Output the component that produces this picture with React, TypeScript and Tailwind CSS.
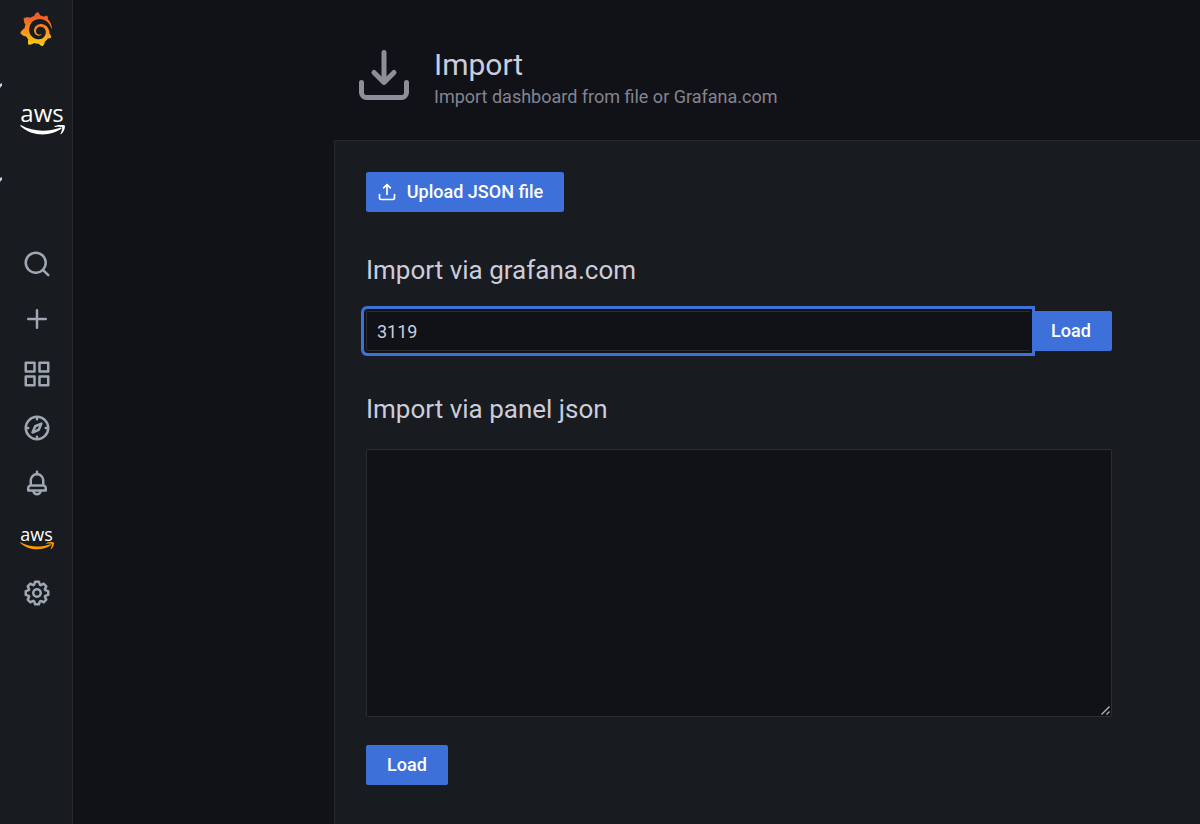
import {useState} from 'react'
import type {ReactNode} from 'react'
import {SiGrafana} from 'react-icons/si'

const TRAY =
  'M21,14a1,1,0,0,0-1,1v4a1,1,0,0,1-1,1H5a1,1,0,0,1-1-1V15a1,1,0,0,0-2,0v4a3,3,0,0,0,3,3H19a3,3,0,0,0,3-3V15A1,1,0,0,0,21,14Z'

const icons = {
  search:
    'M21.71,20.29,18,16.61A9,9,0,1,0,16.61,18l3.68,3.68a1,1,0,0,0,1.42,0A1,1,0,0,0,21.71,20.29ZM11,18a7,7,0,1,1,7-7A7,7,0,0,1,11,18Z',
  plus: 'M19,11H13V5a1,1,0,0,0-2,0v6H5a1,1,0,0,0,0,2h6v6a1,1,0,0,0,2,0V13h6a1,1,0,0,0,0-2Z',
  apps: 'M10,13H3a1,1,0,0,0-1,1v7a1,1,0,0,0,1,1h7a1,1,0,0,0,1-1V14A1,1,0,0,0,10,13ZM9,20H4V15H9ZM21,2H14a1,1,0,0,0-1,1v7a1,1,0,0,0,1,1h7a1,1,0,0,0,1-1V3A1,1,0,0,0,21,2ZM20,9H15V4h5Zm1,4H14a1,1,0,0,0-1,1v7a1,1,0,0,0,1,1h7a1,1,0,0,0,1-1V14A1,1,0,0,0,21,13Zm-1,7H15V15h5ZM10,2H3A1,1,0,0,0,2,3v7a1,1,0,0,0,1,1h7a1,1,0,0,0,1-1V3A1,1,0,0,0,10,2ZM9,9H4V4H9Z',
  compass:
    'M12,2A10,10,0,1,0,22,12,10,10,0,0,0,12,2Zm1,17.93V19a1,1,0,0,0-2,0v.93A8,8,0,0,1,4.07,13H5a1,1,0,0,0,0-2H4.07A8,8,0,0,1,11,4.07V5a1,1,0,0,0,2,0V4.07A8,8,0,0,1,19.93,11H19a1,1,0,0,0,0,2h.93A8,8,0,0,1,13,19.93ZM15.14,7.55l-5,2.12a1,1,0,0,0-.52.52l-2.12,5a1,1,0,0,0,.21,1.1,1,1,0,0,0,.7.3.93.93,0,0,0,.4-.09l5-2.12a1,1,0,0,0,.52-.52l2.12-5a1,1,0,0,0-1.31-1.31Zm-2.49,5.1-2.28,1,1-2.28,2.28-1Z',
  bell: 'M18,13.18V10a6,6,0,0,0-5-5.91V3a1,1,0,0,0-2,0V4.09A6,6,0,0,0,6,10v3.18A3,3,0,0,0,4,16v2a1,1,0,0,0,1,1H8.14a4,4,0,0,0,7.72,0H19a1,1,0,0,0,1-1V16A3,3,0,0,0,18,13.18ZM8,10a4,4,0,0,1,8,0v3H8Zm4,10a2,2,0,0,1-1.72-1h3.44A2,2,0,0,1,12,20Zm6-3H6V16a1,1,0,0,1,1-1H17a1,1,0,0,1,1,1Z',
  cog: 'M21.32,9.55l-1.89-.63.89-1.78A1,1,0,0,0,20.13,6L18,3.87a1,1,0,0,0-1.15-.19l-1.78.89-.63-1.89A1,1,0,0,0,13.5,2h-3a1,1,0,0,0-.95.68L8.92,4.57,7.14,3.68A1,1,0,0,0,6,3.87L3.87,6a1,1,0,0,0-.19,1.15l.89,1.78-1.89.63A1,1,0,0,0,2,10.5v3a1,1,0,0,0,.68.95l1.89.63-.89,1.78A1,1,0,0,0,3.87,18L6,20.13a1,1,0,0,0,1.15.19l1.78-.89.63,1.89a1,1,0,0,0,.95.68h3a1,1,0,0,0,.95-.68l.63-1.89,1.78.89A1,1,0,0,0,18,20.13L20.13,18a1,1,0,0,0,.19-1.15l-.89-1.78,1.89-.63A1,1,0,0,0,22,13.5v-3A1,1,0,0,0,21.32,9.55ZM20,12.78l-1.2.4A2,2,0,0,0,17.64,16l.57,1.14-1.1,1.1L16,17.64a2,2,0,0,0-2.79,1.16l-.4,1.2H11.22l-.4-1.2A2,2,0,0,0,8,17.64l-1.14.57-1.1-1.1L6.36,16A2,2,0,0,0,5.2,13.18L4,12.78V11.22l1.2-.4A2,2,0,0,0,6.36,8L5.79,6.89l1.1-1.1L8,6.36A2,2,0,0,0,10.82,5.2l.4-1.2h1.56l.4,1.2A2,2,0,0,0,16,6.36l1.14-.57,1.1,1.1L17.64,8a2,2,0,0,0,1.16,2.79l1.2.4ZM12,8a4,4,0,1,0,4,4A4,4,0,0,0,12,8Zm0,6a2,2,0,1,1,2-2A2,2,0,0,1,12,14Z',
  import: `${TRAY}M11.29,15.71a1,1,0,0,0,.33.21.94.94,0,0,0,.76,0,1,1,0,0,0,.33-.21l4-4a1,1,0,0,0-1.42-1.42L13,12.59V3a1,1,0,0,0-2,0v9.59l-2.29-2.3a1,1,0,1,0-1.42,1.42Z`,
  upload: `${TRAY}M8.71,7.71,11,5.41V15a1,1,0,0,0,2,0V5.41l2.29,2.3a1,1,0,0,0,1.42,0,1,1,0,0,0,0-1.42l-4-4a1,1,0,0,0-.33-.21,1,1,0,0,0-.76,0,1,1,0,0,0-.33.21l-4,4A1,1,0,1,0,8.71,7.71Z`,
}

function Icon({
  name,
  className,
}: {
  name: keyof typeof icons
  className: string
}) {
  return (
    <svg
      viewBox="0 0 24 24"
      fill="currentColor"
      className={className}
      aria-hidden="true"
    >
      <path d={icons[name]} />
    </svg>
  )
}

function Smile({className}: {className: string}) {
  return (
    <svg
      viewBox="0 0 45 10"
      fill="currentColor"
      className={className}
      aria-hidden="true"
    >
      <path d="M.4.9C0 .4.6-.1 1.3.3 13 6.8 27 7.3 40 2.7c1.2-.4 2.1.6 1 1.4C30 11.6 11.5 11.6.4.9Z" />
      <path d="M42 2.4c-.8-1-5.2-.5-7.2-.3-.6.1-.7-.5-.1-.8 3.4-2 9.3-1.6 10-.8.7.9-.2 6-3.4 8.6-.5.4-1 .2-.8-.4.8-1.8 2.3-5.3 1.5-6.3Z" />
    </svg>
  )
}

function NavItem({label, children}: {label: string; children: ReactNode}) {
  return (
    <li>
      <a
        href="#"
        aria-label={label}
        className="flex size-full flex-col items-center justify-center"
      >
        {children}
      </a>
    </li>
  )
}

function GrafanaLogo() {
  return (
    <>
      <svg className="absolute size-0" aria-hidden="true">
        <defs>
          <linearGradient id="grafana" x1="0" y1="1" x2="0" y2="0">
            <stop offset="0" stopColor="#fcd40c" />
            <stop offset="0.3" stopColor="#faa41a" />
            <stop offset="0.9" stopColor="#f05a28" />
          </linearGradient>
        </defs>
      </svg>
      <SiGrafana className="size-[34px]" fill="url(#grafana)" />
    </>
  )
}

// Tip of an element that hangs past the left edge of the window
function EdgeMark() {
  return (
    <svg viewBox="0 0 2 6" className="h-[6px] w-[2px]" aria-hidden="true">
      <path d="M0 1 2 0v2.500L0 5Z" fill="#ccccdc" />
    </svg>
  )
}

function Sidebar() {
  return (
    <nav
      aria-label="Main"
      className="w-[73px] shrink-0 border-r border-[#25282d] bg-[#181b1f]"
    >
      <a
        href="#"
        aria-label="Home"
        className="flex h-[58px] items-center justify-center"
      >
        <GrafanaLogo />
      </a>
      <div className="flex h-[179px] flex-col pt-[25px]">
        <EdgeMark />
        <div className="flex h-[88px] flex-col items-center pt-3 pl-3 text-white">
          <span className="font-['Open_Sans',sans-serif] text-2xl leading-6 font-medium">
            aws
          </span>
          <Smile className="h-[10px] w-[45px]" />
        </div>
        <EdgeMark />
      </div>
      <ul className="grid h-[383px] auto-rows-fr pl-px text-[#9fa7b3]">
        <NavItem label="Search">
          <Icon name="search" className="size-[30px]" />
        </NavItem>
        <NavItem label="Create">
          <Icon name="plus" className="size-[30px]" />
        </NavItem>
        <NavItem label="Dashboards">
          <Icon name="apps" className="size-[30px]" />
        </NavItem>
        <NavItem label="Explore">
          <Icon name="compass" className="size-[30px]" />
        </NavItem>
        <NavItem label="Alerting">
          <Icon name="bell" className="size-[30px]" />
        </NavItem>
        <NavItem label="AWS">
          <span className="font-['Open_Sans',sans-serif] text-lg leading-4 font-medium text-white">
            aws
          </span>
          <Smile className="h-2 w-[34px] text-[#ff9900]" />
        </NavItem>
        <NavItem label="Configuration">
          <Icon name="cog" className="size-[30px]" />
        </NavItem>
      </ul>
    </nav>
  )
}

const button =
  'flex h-10 items-center justify-center rounded-[2px] bg-[#3d71d9] text-lg font-medium text-white'

function ImportForm() {
  const [dashboard, setDashboard] = useState('3119')
  const [json, setJson] = useState('')

  return (
    <form
      className="flex max-w-[746px] flex-col items-start"
      onSubmit={e => e.preventDefault()}
    >
      <button
        type="button"
        className={`${button} w-[198px] gap-[10px] pr-[10px]`}
      >
        <Icon name="upload" className="size-5" />
        Upload JSON file
      </button>

      <label
        htmlFor="dashboard"
        className="mt-10 text-[26px] leading-9 text-[#ccccdc]"
      >
        Import via grafana.com
      </label>
      <div className="mt-[23px] flex w-full">
        <input
          id="dashboard"
          type="text"
          value={dashboard}
          onChange={e => setDashboard(e.target.value)}
          className="relative z-10 h-10 min-w-0 flex-1 rounded-l-[2px] border border-r-0 border-[#2c2d33] bg-[#111217] px-[10px] text-lg text-[#ccccdc] shadow-[0_0_0_2px_#111217,0_0_0_5px_#3d71d9] outline-none"
        />
        <button type="submit" className={`${button} w-[82px]`}>
          Load
        </button>
      </div>

      <label
        htmlFor="json"
        className="mt-10 text-[26px] leading-9 text-[#ccccdc]"
      >
        Import via panel json
      </label>
      <div className="relative mt-[22px] flex w-full">
        <textarea
          id="json"
          value={json}
          onChange={e => setJson(e.target.value)}
          className="h-[268px] w-full resize-y rounded-[2px] border border-[#2c2d33] bg-[#111217] px-[10px] py-2 text-lg text-[#ccccdc] scheme-dark outline-none [&::-webkit-resizer]:bg-transparent"
        />
        <svg
          viewBox="0 0 9 9"
          className="pointer-events-none absolute right-[2px] bottom-[2px] size-[9px]"
          fill="none"
          stroke="#b4b4b8"
          strokeWidth="1.300"
          aria-hidden="true"
        >
          <path d="M.5 8.500 8.500.5M5.500 8.500l3-3" />
        </svg>
      </div>
      <button type="submit" className={`${button} mt-7 w-[82px]`}>
        Load
      </button>
    </form>
  )
}

export default function App() {
  return (
    <div className="flex min-h-screen bg-[#111217] font-[Roboto,sans-serif]">
      <Sidebar />
      <main className="flex min-w-0 flex-1 flex-col pl-[261px]">
        <header className="flex h-[140px] items-center gap-5 pt-[10px] pl-5 whitespace-nowrap">
          <Icon name="import" className="size-[60px] shrink-0 text-[#8e8e99]" />
          <div className="pt-2">
            <h1 className="text-[30px] leading-9 text-[#ccccdc]">Import</h1>
            <p className="text-lg leading-7 text-[#84848f]">
              Import dashboard from file or Grafana.com
            </p>
          </div>
        </header>
        <section className="flex-1 border-t border-l border-[#25282d] bg-[#181b1f] px-[31px] pt-[31px] pb-10">
          <ImportForm />
        </section>
      </main>
    </div>
  )
}
